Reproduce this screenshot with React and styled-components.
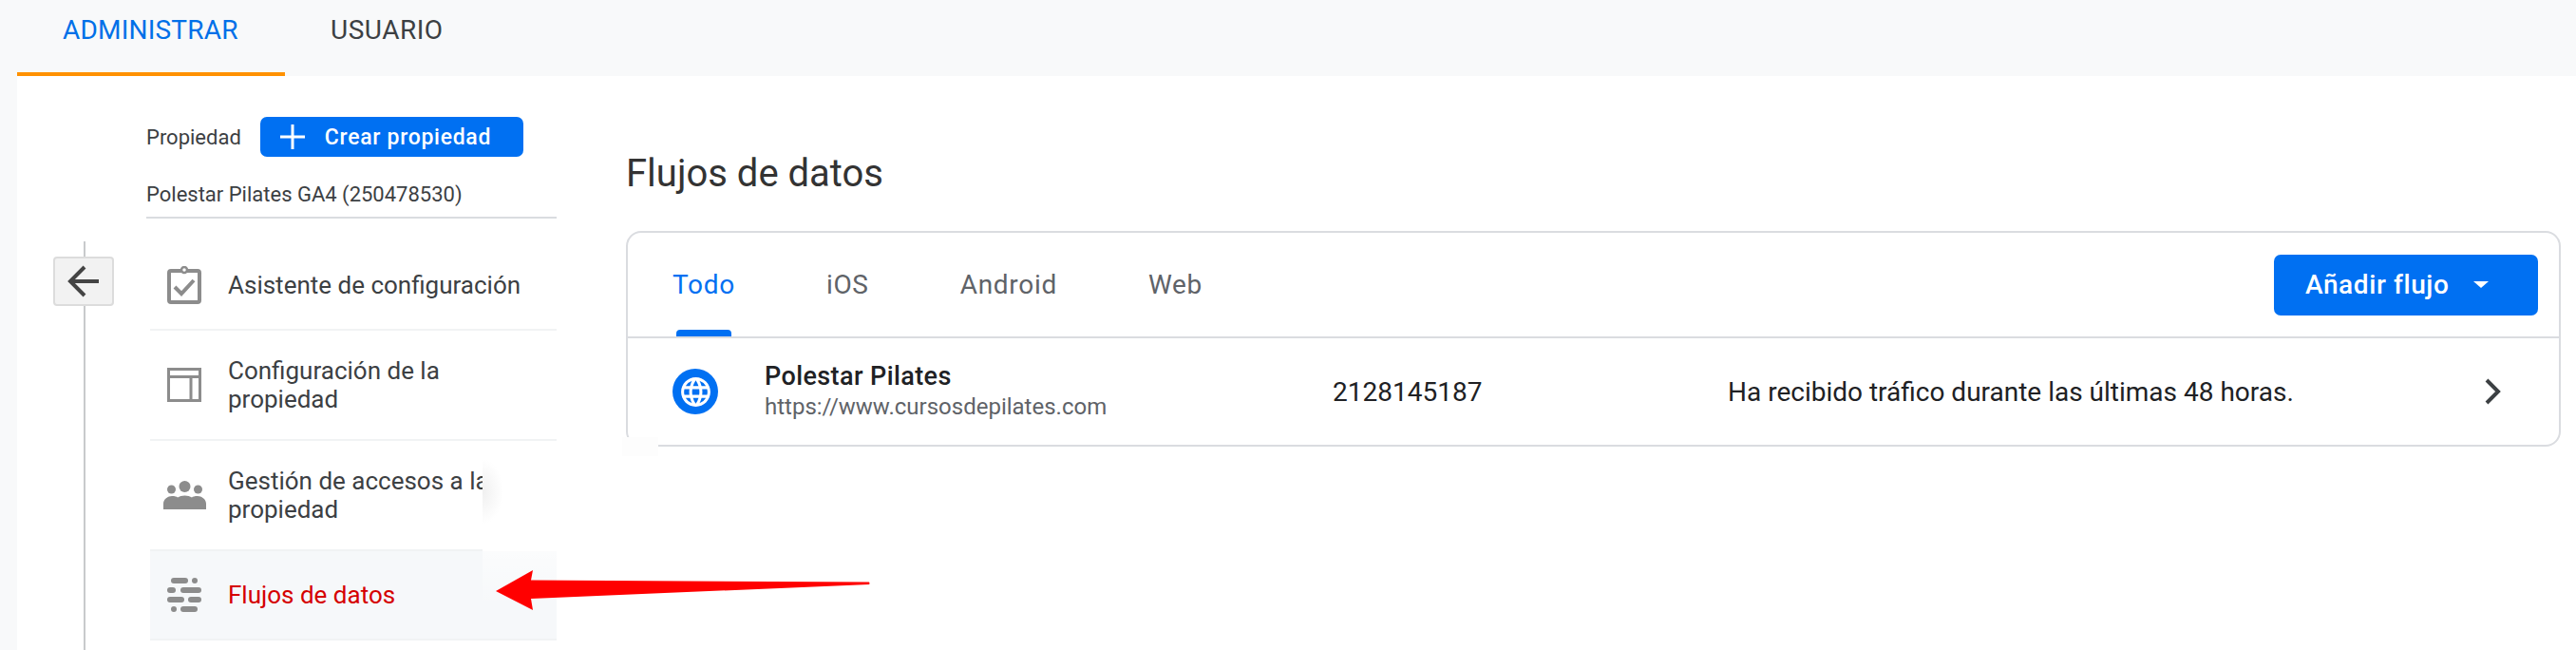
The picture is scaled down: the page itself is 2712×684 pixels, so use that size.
import React from 'react';
import styled, { createGlobalStyle } from 'styled-components';
import { MdLanguage } from 'react-icons/md';

const GlobalStyle = createGlobalStyle`
    html, body {
        margin: 0;
        height: 684px;
        overflow: hidden;
        background: #f8f9fa;
        font-family: Roboto, "Liberation Sans", sans-serif;
    }
`;

const Page = styled.div`
    position: relative;
    width: 2712px;
    height: 684px;
    display: flex;
    flex-direction: column;
`;

const TopBar = styled.nav`
    height: 80px;
    padding-left: 18px;
    display: flex;
    flex-shrink: 0;
`;

const TopTab = styled.div`
    width: ${props => props.width}px;
    box-sizing: border-box;
    padding-left: 48px;
    line-height: 64px;
    font-size: 28px;
    letter-spacing: ${props => (props.active ? '0.2px' : '0.5px')};
    color: ${props => (props.active ? '#0070e8' : '#3c4043')};
    border-bottom: 4px solid ${props => (props.active ? '#ff9100' : 'transparent')};
`;

const Panel = styled.div`
    flex: 1;
    margin-left: 18px;
    background: #fff;
    display: flex;
    min-height: 0;
`;

const Rail = styled.div`
    width: 136px;
    flex-shrink: 0;
    padding: 174px 0 0 38px;
    box-sizing: border-box;
    display: flex;
    flex-direction: column;
`;

const RailLine = styled.div`
    width: 2px;
    margin-left: 32px;
    background: #c8cacc;
    height: ${props => (props.grow ? 'auto' : '16px')};
    flex: ${props => (props.grow ? 1 : 'none')};
`;

const BackButton = styled.div`
    width: 64px;
    height: 52px;
    box-sizing: border-box;
    border: 2px solid #dcdcdc;
    border-radius: 4px;
    background: #f2f2f2;
    display: flex;
    align-items: center;
    justify-content: center;
`;

const Sidebar = styled.aside`
    width: 432px;
    flex-shrink: 0;
    padding-top: 43px;
    box-sizing: border-box;
`;

const PropertyRow = styled.div`
    display: flex;
    align-items: center;
    gap: 20px;
    height: 42px;
`;

const PropertyLabel = styled.span`
    font-size: 22px;
    color: #3c4043;
`;

const CreateButton = styled.div`
    width: 277px;
    height: 42px;
    box-sizing: border-box;
    padding-left: 21px;
    border-radius: 7px;
    background: #0070f2;
    color: #fff;
    font-size: 23px;
    letter-spacing: 0.7px;
    font-weight: 500;
    display: flex;
    align-items: center;
    gap: 21px;
`;

const PropertyName = styled.div`
    height: 65px;
    line-height: 80px;
    box-sizing: border-box;
    font-size: 22px;
    color: #3c4043;
    border-bottom: 2px solid #dadce0;
`;

const Nav = styled.div`
    margin-top: 24px;
    padding-left: 4px;
`;

const NavItem = styled.div`
    position: relative;
    box-sizing: border-box;
    height: ${props => (props.tall ? 116 : 94)}px;
    display: flex;
    align-items: center;
    border-bottom: 2px solid #f1f3f4;
    background: ${props => (props.active ? '#f6f8fa' : '#fff')};
`;

const IconSlot = styled.div`
    width: 72px;
    margin-right: 10px;
    flex-shrink: 0;
    display: flex;
    justify-content: center;
`;

const NavLabel = styled.div`
    max-width: 330px;
    font-size: 26px;
    line-height: 30px;
    color: ${props => (props.active ? '#d50000' : '#3c4043')};
`;

const Smudge = styled.div`
    position: absolute;
    left: 350px;
    top: 0;
    width: 90px;
    bottom: -2px;
    background: radial-gradient(ellipse 22px 34px at 0 46%, #f0f0f0 0%, #ffffff 100%);
`;

const RowFade = styled.div`
    position: absolute;
    left: 350px;
    right: 0;
    top: -2px;
    height: 60px;
    background: linear-gradient(to bottom, rgba(255, 255, 255, 0.6), rgba(255, 255, 255, 0));
`;

const Main = styled.main`
    flex: 1;
    padding-left: 73px;
    min-width: 0;
`;

const Title = styled.h1`
    margin: 0;
    height: 163px;
    padding-top: 80px;
    box-sizing: border-box;
    font-size: 40px;
    line-height: 46px;
    font-weight: 400;
    color: #333;
`;

const Card = styled.section`
    position: relative;
    width: 2037px;
    height: 227px;
    box-sizing: border-box;
    border: 2px solid #dadce0;
    border-radius: 16px;
`;

const CardHeader = styled.div`
    height: 111px;
    box-sizing: border-box;
    border-bottom: 2px solid #dadce0;
    padding: 0 22px 0 47px;
    display: flex;
    align-items: center;
    justify-content: space-between;
`;

const Tabs = styled.div`
    display: flex;
    gap: 96px;
    height: 109px;
`;

const Tab = styled.div`
    position: relative;
    display: flex;
    align-items: center;
    font-size: 28px;
    letter-spacing: 0.7px;
    color: ${props => (props.active ? '#0070f2' : '#5f6368')};
    &::after {
        content: '';
        display: ${props => (props.active ? 'block' : 'none')};
        position: absolute;
        left: 4px;
        right: 4px;
        bottom: 0;
        height: 7px;
        border-radius: 4px 4px 0 0;
        background: #0070f2;
    }
`;

const AddButton = styled.div`
    width: 278px;
    height: 64px;
    box-sizing: border-box;
    padding-left: 33px;
    border-radius: 7px;
    background: #0070f2;
    color: #fff;
    font-size: 28px;
    letter-spacing: 0.6px;
    font-weight: 500;
    display: flex;
    align-items: center;
    gap: 26px;
`;

const Caret = styled.span`
    width: 0;
    height: 0;
    border-left: 8px solid transparent;
    border-right: 8px solid transparent;
    border-top: 7px solid #fff;
`;

const StreamRow = styled.div`
    height: 112px;
    padding-left: 47px;
    display: grid;
    grid-template-columns: 97px 598px 416px 797px auto;
    align-items: center;
    font-size: 28px;
    color: #202124;
`;

const GlobeBadge = styled.div`
    width: 48px;
    height: 48px;
    border-radius: 50%;
    background: #0070f2;
    color: #fff;
    display: flex;
    align-items: center;
    justify-content: center;
`;

const StreamName = styled.div`
    font-weight: 500;
    font-size: 27px;
    letter-spacing: 0.4px;
    line-height: 32px;
`;

const StreamUrl = styled.div`
    font-size: 24px;
    line-height: 32px;
    color: #5f6368;
`;

const CornerPatch = styled.div`
    position: absolute;
    left: -6px;
    bottom: -12px;
    width: 38px;
    height: 20px;
    background: #fdfdfd;
`;

const ArrowOverlay = styled.svg`
    position: absolute;
    left: 0;
    top: 0;
    pointer-events: none;
`;

const ClipboardIcon = () => (
    <svg width="36" height="40" viewBox="0 0 36 40" fill="none">
        <rect x="2" y="5" width="32" height="33" rx="2" stroke="#8c8c8c" strokeWidth="4" />
        <circle cx="18" cy="4" r="3" stroke="#8c8c8c" strokeWidth="2.5" fill="#fff" />
        <path d="M8 22l7 7 13-14" stroke="#8c8c8c" strokeWidth="4" />
    </svg>
);

const LayoutIcon = () => (
    <svg width="36" height="36" viewBox="0 0 36 36" fill="none" stroke="#8c8c8c" strokeWidth="3">
        <rect x="1.5" y="1.5" width="33" height="33" />
        <path d="M1.5 9.5h33M25 9.5v25" />
    </svg>
);

const PeopleIcon = () => (
    <svg width="45" height="30" viewBox="0 0 45 30" fill="#8c8c8c">
        <circle cx="22.5" cy="6" r="6" />
        <circle cx="8.5" cy="9" r="4.5" />
        <circle cx="36.5" cy="9" r="4.5" />
        <path d="M0 30v-6c0-5 5-8 9-8 3 0 5 .6 6 1.4 2-1.2 4.5-2 7.5-2s5.5 .8 7.5 2c1-.8 3-1.4 6-1.4 4 0 9 3 9 8v6z" />
    </svg>
);

const StreamsIcon = () => (
    <svg width="36" height="36" viewBox="0 0 36 36" fill="#8c8c8c">
        <rect x="4" y="0" width="18" height="6" rx="3" />
        <circle cx="29" cy="3" r="3" />
        <rect x="0" y="10" width="9" height="6" rx="3" />
        <rect x="14" y="10" width="22" height="6" rx="3" />
        <rect x="0" y="20" width="18" height="6" rx="3" />
        <rect x="22" y="20" width="14" height="6" rx="3" />
        <circle cx="7" cy="33" r="3" />
        <rect x="14" y="30" width="18" height="6" rx="3" />
    </svg>
);

const navItems = [
    { label: 'Asistente de configuración', icon: <ClipboardIcon /> },
    { label: 'Configuración de la propiedad', icon: <LayoutIcon />, tall: true },
    { label: 'Gestión de accesos a la propiedad', icon: <PeopleIcon />, tall: true, smudge: true },
    { label: 'Flujos de datos', icon: <StreamsIcon />, active: true },
];

const App = () => {
    return (
        <Page>
            <GlobalStyle />
            <TopBar>
                <TopTab active width={282}>ADMINISTRAR</TopTab>
                <TopTab width={300}>USUARIO</TopTab>
            </TopBar>
            <Panel>
                <Rail>
                    <RailLine />
                    <BackButton>
                        <svg width="34" height="34" viewBox="0 0 34 34" fill="none" stroke="#444" strokeWidth="4">
                            <path d="M33 17H4M18 2L3 17l15 15" />
                        </svg>
                    </BackButton>
                    <RailLine grow />
                </Rail>
                <Sidebar>
                    <PropertyRow>
                        <PropertyLabel>Propiedad</PropertyLabel>
                        <CreateButton>
                            <svg width="26" height="26" viewBox="0 0 26 26" stroke="#fff" strokeWidth="3">
                                <path d="M13 0v26M0 13h26" />
                            </svg>
                            Crear propiedad
                        </CreateButton>
                    </PropertyRow>
                    <PropertyName>Polestar Pilates GA4 (250478530)</PropertyName>
                    <Nav>
                        {navItems.map(item => (
                            <NavItem key={item.label} tall={item.tall} active={item.active}>
                                <IconSlot>{item.icon}</IconSlot>
                                <NavLabel active={item.active}>{item.label}</NavLabel>
                                {item.smudge && <Smudge />}
                                {item.active && <RowFade />}
                            </NavItem>
                        ))}
                    </Nav>
                </Sidebar>
                <Main>
                    <Title>Flujos de datos</Title>
                    <Card>
                        <CardHeader>
                            <Tabs>
                                <Tab active>Todo</Tab>
                                <Tab>iOS</Tab>
                                <Tab>Android</Tab>
                                <Tab>Web</Tab>
                            </Tabs>
                            <AddButton>
                                Añadir flujo
                                <Caret />
                            </AddButton>
                        </CardHeader>
                        <StreamRow>
                            <GlobeBadge><MdLanguage size={37} /></GlobeBadge>
                            <div>
                                <StreamName>Polestar Pilates</StreamName>
                                <StreamUrl>https://www.cursosdepilates.com</StreamUrl>
                            </div>
                            <div>2128145187</div>
                            <div>Ha recibido tráfico durante las últimas 48 horas.</div>
                            <svg width="18" height="28" viewBox="0 0 18 28" fill="none" stroke="#3c4043" strokeWidth="4">
                                <path d="M2 2l12 12L2 26" />
                            </svg>
                        </StreamRow>
                        <CornerPatch />
                    </Card>
                </Main>
            </Panel>
            <ArrowOverlay width="2712" height="684" viewBox="0 0 2712 684">
                <path d="M522 622L561 600L559 610.500L915 612.500Q916 614 915 615L559 630L561 642Z" fill="#ff0000" />
            </ArrowOverlay>
        </Page>
    );
};

export default App;
